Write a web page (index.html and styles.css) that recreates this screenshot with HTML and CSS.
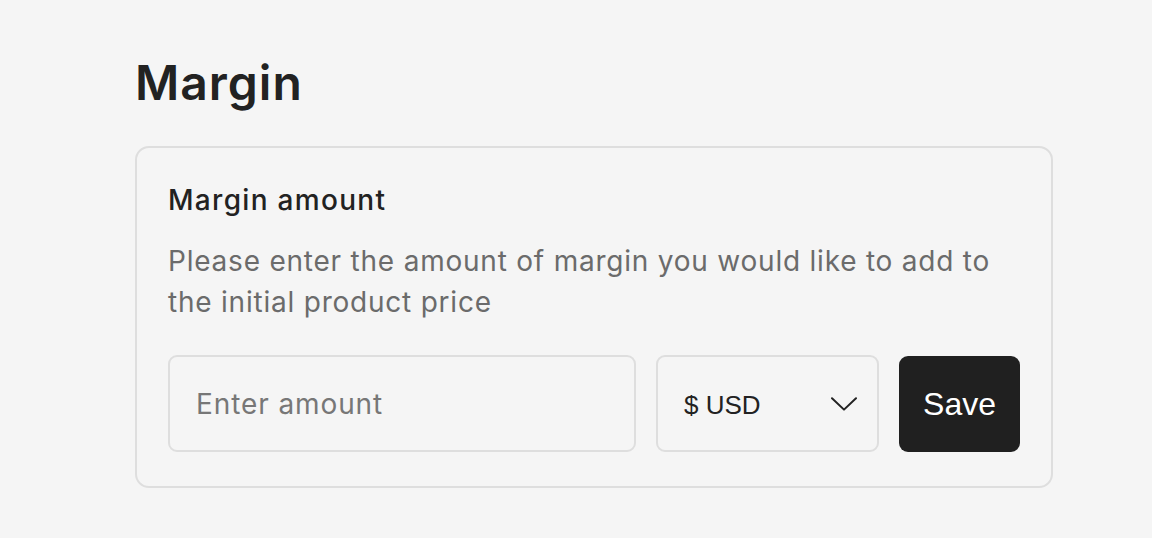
FILE: index.html
```html
<!DOCTYPE html>
<html lang="en">
<head>
<meta charset="utf-8">
<title>Margin</title>
<link rel="stylesheet" href="styles.css">
</head>
<body>
<main class="page">
  <h1 class="title">Margin</h1>
  <section class="card">
    <h2 class="card-title">Margin amount</h2>
    <p class="card-desc">Please enter the amount of margin you would like to add to the initial product price</p>
    <form class="row" onsubmit="return false">
      <input class="amount" type="text" placeholder="Enter amount">
      <div class="select">
        <span class="select-label">$ USD</span>
        <svg class="chevron" width="26" height="14" viewBox="0 0 26 14" fill="none"><path d="M1 1.2 L13 12.6 L25 1.2" stroke="#222" stroke-width="2" stroke-linecap="round" stroke-linejoin="round"/></svg>
      </div>
      <button class="save" type="button">Save</button>
    </form>
  </section>
</main>
</body>
</html>
```

FILE: styles.css
```css
html, body {
  margin: 0;
  padding: 0;
  background: #f5f5f5;
}
.page {
  padding: 47px 0 0 135px;
  width: 918px;
  font-family: Inter, "Noto Sans", sans-serif;
  color: #222;
}
.title {
  margin: 0 0 27px 0;
  font-size: 48px;
  line-height: 72px;
  font-weight: 600;
  letter-spacing: 1px;
}
.card {
  border: 2px solid #dedede;
  border-radius: 14px;
  padding: 31px 31px 34px 31px;
}
.card-title {
  margin: 0;
  font-size: 28px;
  line-height: 42px;
  font-weight: 500;
  letter-spacing: 1.3px;
}
.card-desc {
  margin: 20px 0 32px 0;
  font-size: 28px;
  line-height: 41px;
  font-weight: 400;
  color: #6b6b6b;
  letter-spacing: 0.78px;
}
.row {
  display: flex;
  gap: 20px;
  height: 97px;
}
.amount {
  box-sizing: border-box;
  width: 468px;
  height: 97px;
  border: 2px solid #dedede;
  border-radius: 9px;
  background: #f5f5f5;
  padding: 0 26px;
  font-family: Inter, "Noto Sans", sans-serif;
  font-size: 28px;
  letter-spacing: 0.9px;
  color: #222;
  outline: none;
}
.amount::placeholder {
  color: #777;
}
.select {
  box-sizing: border-box;
  width: 223px;
  height: 97px;
  border: 2px solid #dedede;
  border-radius: 9px;
  display: flex;
  align-items: center;
  justify-content: space-between;
  padding: 0 20px 0 26px;
  font-family: "Liberation Sans", Arial, sans-serif;
  font-size: 26px;
  color: #222;
}
.select-label {
  padding-top: 3px;
}
.chevron {
  margin-top: 1px;
}
.save {
  width: 121px;
  height: 96px;
  border: none;
  border-radius: 9px;
  background: #202020;
  color: #fff;
  font-family: "Liberation Sans", Arial, sans-serif;
  font-size: 32px;
  padding: 0;
  margin-top: 1px;
}
```
